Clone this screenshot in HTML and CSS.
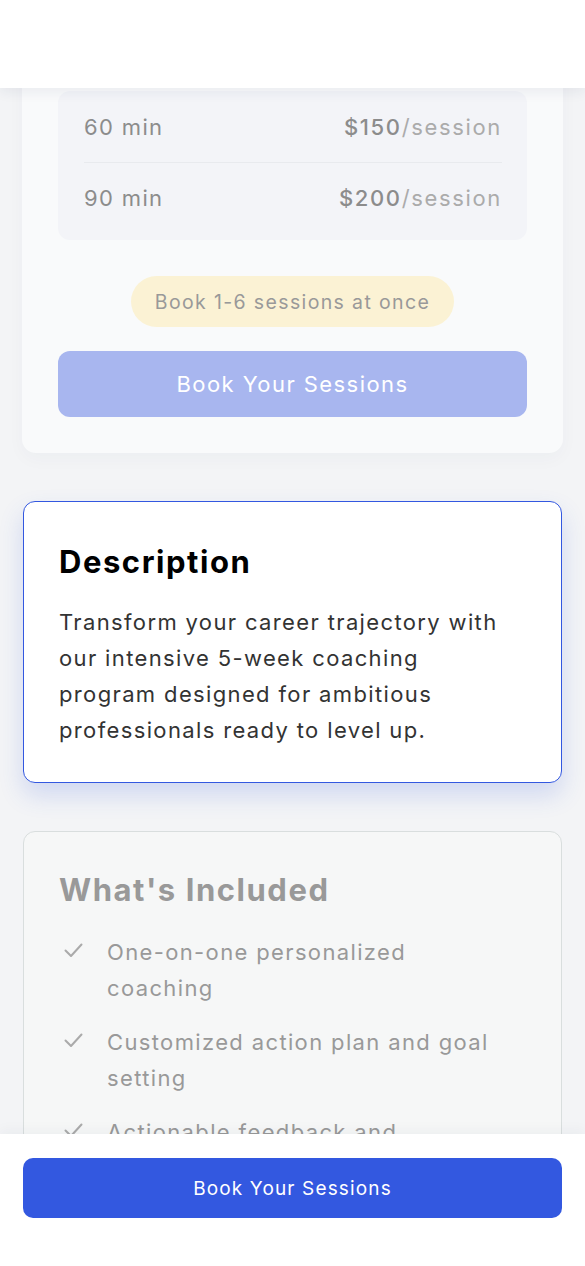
FILE: index.html
```html
<!DOCTYPE html>
<html lang="en">
<head>
<meta charset="utf-8">
<title>Book Your Sessions</title>
<link rel="stylesheet" href="styles.css">
</head>
<body>
<header class="topbar"></header>
<main class="page">
  <section class="card pricing">
    <div class="price-table">
      <div class="price-row">
        <span class="duration">60 min</span>
        <span class="price"><b>$150</b>/session</span>
      </div>
      <div class="price-row">
        <span class="duration">90 min</span>
        <span class="price"><b>$200</b>/session</span>
      </div>
    </div>
    <div class="pill-wrap"><span class="pill">Book 1-6 sessions at once</span></div>
    <button class="btn btn-faded">Book Your Sessions</button>
  </section>

  <section class="card description">
    <h2 class="card-title">Description</h2>
    <p class="desc-text">Transform your career trajectory with our intensive 5-week coaching program designed for ambitious professionals ready to level up.</p>
  </section>

  <section class="card included">
    <h2 class="card-title muted">What's Included</h2>
    <ul class="checklist">
      <li><svg class="check" viewBox="0 0 20 20" width="20" height="20"><polyline points="2.5,10.5 8,16 18.5,4.5" fill="none" stroke="currentColor" stroke-width="2" stroke-linecap="round" stroke-linejoin="round"/></svg><span class="item-text">One-on-one personalized coaching</span></li>
      <li><svg class="check" viewBox="0 0 20 20" width="20" height="20"><polyline points="2.5,10.5 8,16 18.5,4.5" fill="none" stroke="currentColor" stroke-width="2" stroke-linecap="round" stroke-linejoin="round"/></svg><span class="item-text">Customized action plan and goal setting</span></li>
      <li><svg class="check" viewBox="0 0 20 20" width="20" height="20"><polyline points="2.5,10.5 8,16 18.5,4.5" fill="none" stroke="currentColor" stroke-width="2" stroke-linecap="round" stroke-linejoin="round"/></svg><span class="item-text">Actionable feedback and accountability</span></li>
    </ul>
  </section>
</main>
<footer class="bottombar">
  <button class="btn btn-primary">Book Your Sessions</button>
</footer>
</body>
</html>
```
FILE: styles.css
```css
* { box-sizing: border-box; }
html, body { margin: 0; padding: 0; }
body {
  background: #f3f4f6;
  font-family: Inter, "Open Sans", sans-serif;
  letter-spacing: 0.085em;
  color: #333;
  overflow: hidden;
  height: 1266px;
}
.topbar {
  position: fixed;
  top: 0; left: 0; right: 0;
  height: 88px;
  background: #fff;
  box-shadow: 0 4px 12px rgba(30, 40, 80, 0.07);
  z-index: 10;
}
.page {
  padding: 0 22px 200px;
  display: flex;
  flex-direction: column;
  gap: 48px;
}
.card {
  border-radius: 14px;
  padding: 36px;
}
.pricing {
  background: #f9fafb;
  padding-top: 91px;
  box-shadow: 0 6px 18px rgba(40, 50, 80, 0.03);
}
.price-table {
  background: #f3f4f8;
  border-radius: 12px;
  padding: 0 25px 8px 26px;
}
.price-row {
  display: flex;
  justify-content: space-between;
  align-items: center;
  height: 71px;
  font-size: 22px;
  color: #8c8c8c;
}
.price-row + .price-row { border-top: 1px solid #e8eaee; height: 70px; }
.price { color: #ababab; letter-spacing: 0.075em; }
.price b { font-weight: 500; color: #8c8c8c; }
.pill-wrap { display: flex; justify-content: center; margin-top: 36px; }
.pill {
  background: #fbf2d4;
  color: #999;
  font-size: 19.5px;
  letter-spacing: 0.07em;
  height: 51px;
  padding: 0 24px;
  border-radius: 26px;
  display: inline-flex;
  align-items: center;
}
.btn {
  display: block;
  width: 100%;
  border: 0;
  font-family: inherit;
  letter-spacing: 0.065em;
  color: #fff;
  cursor: pointer;
}
.btn-faded {
  margin-top: 24px;
  height: 66px;
  background: #a8b6ef;
  border-radius: 12px;
  font-size: 22px;
}
.description {
  margin: 0 1px;
  background: #fff;
  border: 1px solid #3358e0;
  border-radius: 12px;
  padding: 37px 35px 34px;
  box-shadow: 0 12px 24px rgba(51, 88, 224, 0.18);
}
.card-title {
  margin: 0;
  font-size: 31px;
  line-height: 46px;
  font-weight: 700;
  letter-spacing: 0.05em;
  color: #000;
}
.card-title.muted { color: #999; }
.desc-text {
  margin: 19px 0 0;
  max-width: 455px;
  font-size: 22px;
  line-height: 36px;
  color: #333;
}
.included {
  margin: 0 1px;
  background: #f6f7f7;
  border: 1px solid #d9dede;
  border-radius: 12px;
  padding: 35px 35px 36px;
}
.checklist {
  list-style: none;
  margin: 21px 0 0;
  padding: 0;
  display: flex;
  flex-direction: column;
  gap: 18px;
}
.checklist li {
  display: flex;
  align-items: flex-start;
  gap: 24px;
  font-size: 22px;
  line-height: 36px;
  color: #999;
}
.item-text { max-width: 405px; }
.check {
  flex: none;
  color: #aaa;
  margin: 6px 0 0 4px;
}
.bottombar {
  position: fixed;
  left: 0; right: 0; bottom: 0;
  height: 132px;
  background: #fff;
  padding: 24px 23px 0;
  box-shadow: 0 -4px 12px rgba(30, 40, 80, 0.04);
  z-index: 10;
}
.btn-primary {
  height: 60px;
  background: #3358e0;
  border-radius: 10px;
  font-size: 19px;
  letter-spacing: 0.06em;
}
```
